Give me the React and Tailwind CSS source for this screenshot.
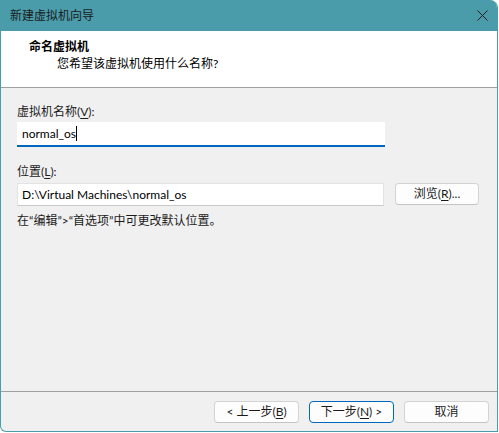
const font = { fontFamily: '"Segoe UI", Lato, "Noto Sans CJK SC", sans-serif' };

const Key = ({ children }) => <span className="underline underline-offset-2">{children}</span>;

const Button = ({ children, primary }) => (
  <button
    className={
      primary
        ? "w-[85px] h-[22px] rounded-[4px] border border-[#0067c0] bg-[#fdfdfd] text-[12px] leading-none text-[#1b1b1b] flex items-center justify-center"
        : "w-[85px] h-[22px] rounded-[4px] border border-[#d3d3d3] border-b-[#c4c4c4] bg-[#fdfdfd] text-[12px] leading-none text-[#1b1b1b] flex items-center justify-center"
    }
  >
    {children}
  </button>
);

export default function App() {
  return (
    <div className="w-[499px] h-[433px] bg-white text-[12px] text-[#1b1b1b]" style={font}>
      <div className="w-[498px] h-[432px] flex flex-col border-x border-b border-[#4a9cab] rounded-tr-[8px] rounded-bl-[6px] overflow-hidden bg-[#f0f0f0]">
        {/* Title bar */}
        <div className="h-[31px] shrink-0 bg-[#4a9cab] flex items-center justify-between pl-[9px] pr-[9px]">
          <span className="text-[12px] leading-4 text-[#1a1a1a]">新建虚拟机向导</span>
          <svg width="11" height="11" viewBox="0 0 11 11" className="mb-[1px]">
            <path d="M0.5 0.5 L10.5 10.5 M10.5 0.5 L0.5 10.5" stroke="#1a1a1a" strokeWidth="1" />
          </svg>
        </div>

        {/* Header */}
        <div className="h-[56px] shrink-0 bg-white pl-[28px] pt-[8px]">
          <div className="font-bold leading-4 text-black">命名虚拟机</div>
          <div className="pl-[28px] mt-[1px] leading-4 text-black">您希望该虚拟机使用什么名称?</div>
        </div>
        <div className="h-px shrink-0 bg-[#a0a0a0]" />

        {/* Body */}
        <div className="flex-1 pl-[16px] pt-[16px]">
          <div className="leading-4">
            虚拟机名称(<Key>V</Key>):
          </div>
          <div className="mt-[2px] w-[368px] h-[25px] bg-white border-b-2 border-[#0067c0] flex items-center pl-[5px]">
            <span className="leading-4 text-black">normal_os</span>
            <span className="inline-block w-px h-[15px] bg-black" />
          </div>

          <div className="mt-[17px] leading-4">
            位置(<Key>L</Key>):
          </div>
          <div className="mt-[3px] flex items-start gap-[11px]">
            <div className="w-[367px] h-[23px] bg-white border border-[#e3e3e3] border-b-[#c8c8c8] flex items-center pl-[4px]">
              <span className="leading-4 text-black">D:\Virtual Machines\normal_os</span>
            </div>
            <button className="w-[84px] h-[22px] rounded-[4px] border border-[#d3d3d3] border-b-[#c4c4c4] bg-[#fdfdfd] text-[12px] leading-none flex items-center justify-center">
              浏览(<Key>R</Key>)...
            </button>
          </div>
          <div className="mt-[7px] leading-4">在“编辑”&gt;“首选项”中可更改默认位置。</div>
        </div>

        {/* Footer */}
        <div className="h-px shrink-0 bg-[#a0a0a0]" />
        <div className="h-[39px] shrink-0 flex justify-end items-start gap-[10px] pt-[9px] pr-[8px]">
          <Button>&lt; 上一步(<Key>B</Key>)</Button>
          <Button primary>下一步(<Key>N</Key>) &gt;</Button>
          <Button>取消</Button>
        </div>
      </div>
    </div>
  );
}
